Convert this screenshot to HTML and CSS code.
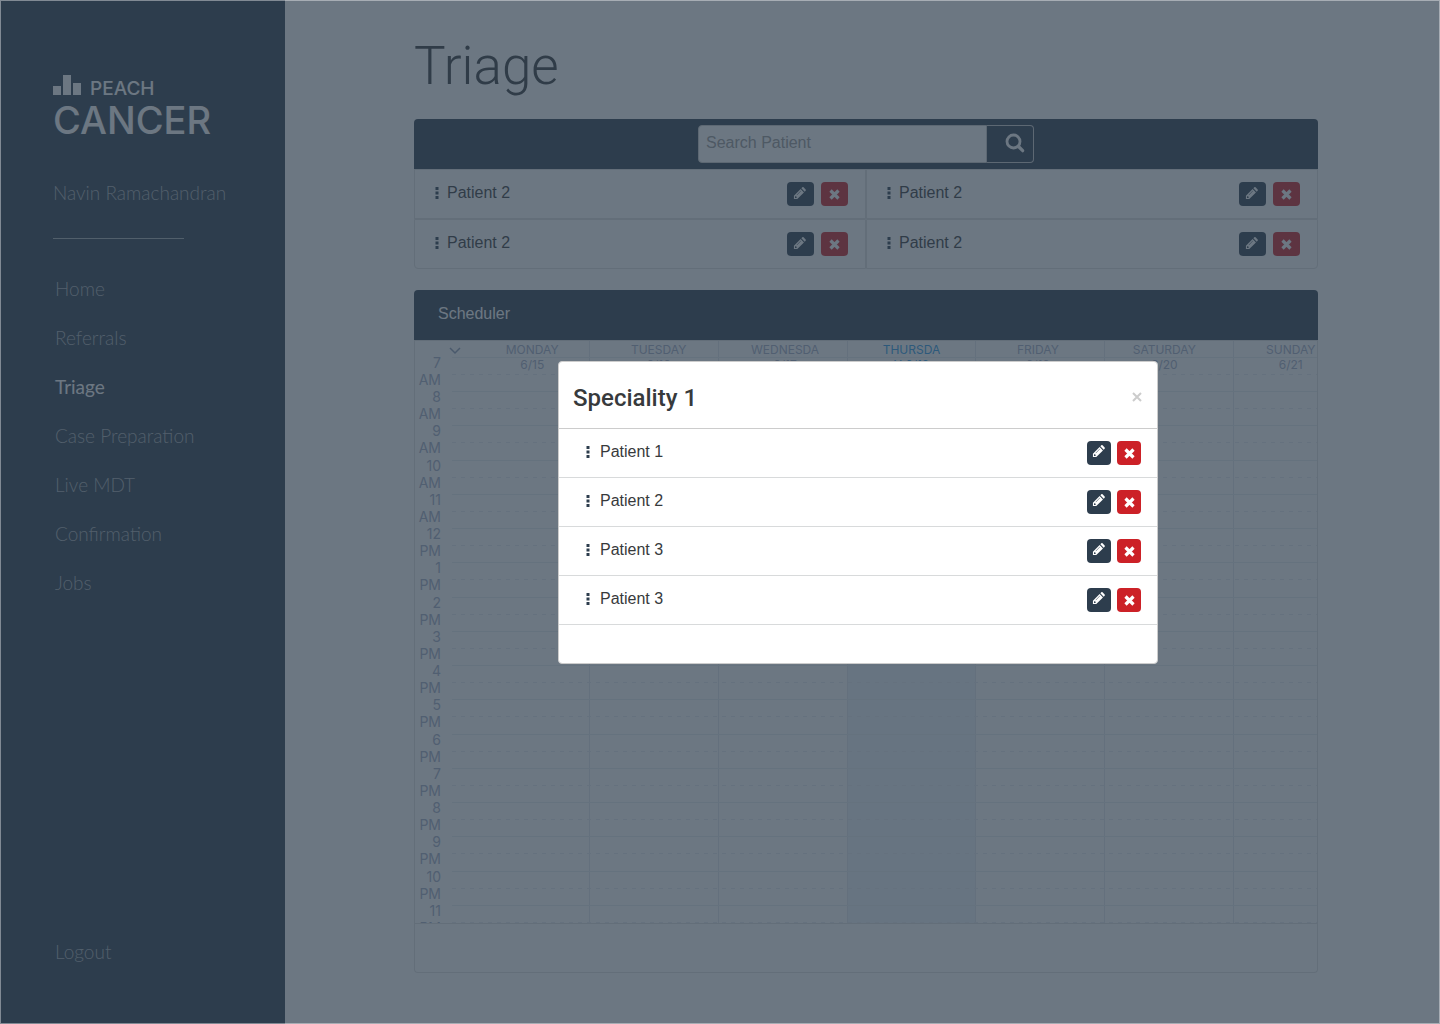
FILE: index.html
```html
<!DOCTYPE html>
<html lang="en">
<head>
<meta charset="utf-8">
<meta name="viewport" content="width=device-width, initial-scale=1">
<title>Triage – Peach Cancer</title>
<link rel="stylesheet" href="styles.css">
</head>
<body>
<svg width="0" height="0" class="sprite" aria-hidden="true">
  <symbol id="pencil" viewBox="0 0 14 14"><path fill="currentColor" fill-rule="evenodd" d="M1 9.4 8.2 2.2l3.600 3.600L4.600 13H1zM2.200 10.600v1.200h1.200l.8-.8-1.200-1.200zM8.300 4.100l.3.3-4.400 4.400-.3-.3zM9 1.400 10 .4q.7-.6 1.400 0l2.200 2.200q.6.7 0 1.400l-1 1z"/></symbol>
  <symbol id="cross" viewBox="0 0 11 11"><path stroke="currentColor" stroke-width="3.200" d="M1.500 1.500l8 8M9.500 1.500l-8 8"/></symbol>
  <symbol id="dots" viewBox="0 0 4 12"><path fill="currentColor" d="M.5 0h3v3h-3zM.5 4.500h3v3h-3zM.5 9h3v3h-3z"/></symbol>
</svg>
<div class="app">
  <aside class="sidebar">
    <div class="logo">
      <div class="logo-top">
        <svg width="28" height="20" viewBox="0 0 28 20" aria-hidden="true"><path fill="currentColor" d="M0 11h8v9H0zM10 0h8v20h-8zM20 8h8v12h-8z"/></svg>
        <span class="logo-small">PEACH</span>
      </div>
      <div class="logo-big">CANCER</div>
    </div>
    <p class="user">Navin Ramachandran</p>
    <nav class="nav">
      <a href="#">Home</a>
      <a href="#">Referrals</a>
      <a href="#" class="active">Triage</a>
      <a href="#">Case Preparation</a>
      <a href="#">Live MDT</a>
      <a href="#">Confirmation</a>
      <a href="#">Jobs</a>
    </nav>
    <a href="#" class="logout">Logout</a>
  </aside>
  <main class="main">
    <h1>Triage</h1>
    <section class="card">
      <form class="card-bar search-bar">
        <div class="search">
          <input type="text" placeholder="Search Patient" aria-label="Search Patient">
          <button type="button" aria-label="Search"><svg width="20" height="20" viewBox="0 0 20 20" fill="none" stroke="currentColor"><circle cx="8.500" cy="8.500" r="6.500" stroke-width="2.800"/><path stroke-width="3.200" stroke-linecap="round" d="M13.500 13.500l4.200 4.200"/></svg></button>
        </div>
      </form>
      <ul class="patients">
        <li><svg class="dots"><use href="#dots"/></svg><span>Patient 2</span><button type="button" class="edit" aria-label="Edit"><svg><use href="#pencil"/></svg></button><button type="button" class="remove" aria-label="Remove"><svg><use href="#cross"/></svg></button></li>
        <li><svg class="dots"><use href="#dots"/></svg><span>Patient 2</span><button type="button" class="edit" aria-label="Edit"><svg><use href="#pencil"/></svg></button><button type="button" class="remove" aria-label="Remove"><svg><use href="#cross"/></svg></button></li>
        <li><svg class="dots"><use href="#dots"/></svg><span>Patient 2</span><button type="button" class="edit" aria-label="Edit"><svg><use href="#pencil"/></svg></button><button type="button" class="remove" aria-label="Remove"><svg><use href="#cross"/></svg></button></li>
        <li><svg class="dots"><use href="#dots"/></svg><span>Patient 2</span><button type="button" class="edit" aria-label="Edit"><svg><use href="#pencil"/></svg></button><button type="button" class="remove" aria-label="Remove"><svg><use href="#cross"/></svg></button></li>
      </ul>
    </section>
    <section class="card">
      <h2 class="card-bar">Scheduler</h2>
      <div class="calendar">
        <div class="days"><div></div><div></div><div></div><div class="today"></div><div></div><div></div><div></div></div>
        <div class="hours">
          <div class="hour"><span>7<br>AM</span><i></i></div>
          <div class="hour"><span>8<br>AM</span><i></i></div>
          <div class="hour"><span>9<br>AM</span><i></i></div>
          <div class="hour"><span>10<br>AM</span><i></i></div>
          <div class="hour"><span>11<br>AM</span><i></i></div>
          <div class="hour"><span>12<br>PM</span><i></i></div>
          <div class="hour"><span>1<br>PM</span><i></i></div>
          <div class="hour"><span>2<br>PM</span><i></i></div>
          <div class="hour"><span>3<br>PM</span><i></i></div>
          <div class="hour"><span>4<br>PM</span><i></i></div>
          <div class="hour"><span>5<br>PM</span><i></i></div>
          <div class="hour"><span>6<br>PM</span><i></i></div>
          <div class="hour"><span>7<br>PM</span><i></i></div>
          <div class="hour"><span>8<br>PM</span><i></i></div>
          <div class="hour"><span>9<br>PM</span><i></i></div>
          <div class="hour"><span>10<br>PM</span><i></i></div>
          <div class="hour"><span>11<br>PM</span><i></i></div>
        </div>
        <div class="day-names">
          <svg width="12" height="8" viewBox="0 0 12 8" fill="none" stroke="currentColor" stroke-width="1.500" aria-hidden="true"><path d="M1 1l5 5 5-5"/></svg>
          <div>MONDAY<br>6/15</div>
          <div>TUESDAY<br>6/16</div>
          <div>WEDNESDA<br>6/17</div>
          <div class="today-name">THURSDA<br>Y 6/18</div>
          <div>FRIDAY<br>6/19</div>
          <div>SATURDAY<br>6/20</div>
          <div>SUNDAY<br>6/21</div>
        </div>
      </div>
      <div class="card-foot"></div>
    </section>
  </main>
</div>
<div class="backdrop">
  <div class="modal" role="dialog" aria-modal="true" aria-labelledby="modal-title">
    <header class="modal-head">
      <h2 id="modal-title">Speciality 1</h2>
      <button type="button" class="close" aria-label="Close"><svg width="10" height="10" viewBox="0 0 10 10" stroke="currentColor" stroke-width="2"><path d="M1 1l8 8M9 1l-8 8"/></svg></button>
    </header>
    <ul class="modal-list">
      <li><svg class="dots"><use href="#dots"/></svg><span>Patient 1</span><button type="button" class="edit" aria-label="Edit"><svg><use href="#pencil"/></svg></button><button type="button" class="remove" aria-label="Remove"><svg><use href="#cross"/></svg></button></li>
      <li><svg class="dots"><use href="#dots"/></svg><span>Patient 2</span><button type="button" class="edit" aria-label="Edit"><svg><use href="#pencil"/></svg></button><button type="button" class="remove" aria-label="Remove"><svg><use href="#cross"/></svg></button></li>
      <li><svg class="dots"><use href="#dots"/></svg><span>Patient 3</span><button type="button" class="edit" aria-label="Edit"><svg><use href="#pencil"/></svg></button><button type="button" class="remove" aria-label="Remove"><svg><use href="#cross"/></svg></button></li>
      <li><svg class="dots"><use href="#dots"/></svg><span>Patient 3</span><button type="button" class="edit" aria-label="Edit"><svg><use href="#pencil"/></svg></button><button type="button" class="remove" aria-label="Remove"><svg><use href="#cross"/></svg></button></li>
    </ul>
  </div>
</div>
</body>
</html>
```
FILE: styles.css
```css
* { box-sizing: border-box; }
body {
  margin: 0;
  font: 16px/24px "Liberation Sans", Arial, sans-serif;
  color: #373a3c;
  background: #fff;
}
h1, h2, p, ul { margin: 0; padding: 0; }
ul { list-style: none; }
button { font: inherit; cursor: pointer; padding: 0; }
.sprite { display: none; }

.app { display: flex; min-height: 100vh; }

/* Sidebar */
.sidebar {
  flex: none;
  width: 285px;
  padding: 75px 24px 60px 53px;
  display: flex;
  flex-direction: column;
  background: #2d3d4d;
  color: #fff;
  font-family: Lato, sans-serif;
}
.logo { font-family: Inter, sans-serif; }
.logo-top { display: flex; align-items: flex-end; gap: 9px; height: 20px; }
.logo-small { font-size: 19px; line-height: 12px; font-weight: 500; }
.logo-big { padding-top: 7px; font-size: 38px; line-height: 36px; font-weight: 500; }
.user {
  margin-top: 43px;
  padding-bottom: 34px;
  font-size: 19px;
  font-weight: 300;
  color: #a6adb3;
  position: relative;
}
.user::after {
  content: "";
  position: absolute;
  left: 0;
  bottom: 0;
  width: 131px;
  height: 1px;
  background: #a6adb3;
}
.nav { display: flex; flex-direction: column; gap: 25px; margin-top: 38px; }
.nav a, .logout {
  padding-left: 2px;
  font-size: 19px;
  font-weight: 300;
  color: #a6adb3;
  text-decoration: none;
}
.nav .active { color: #fff; font-weight: 400; }
.logout { margin-top: auto; }

/* Main column */
.main { flex: 1; min-width: 0; padding: 34px 122px 30px 129px; }
h1 {
  margin-bottom: 21px;
  font: 300 53px/64px Roboto, sans-serif;
}
.card { margin-bottom: 21px; }
.card-bar {
  display: flex;
  align-items: center;
  height: 50px;
  padding: 0 24px 2px;
  border-radius: 4px 4px 0 0;
  background: #2d3d4d;
  color: #fff;
  font-size: 16px;
  font-weight: 400;
}
.search-bar { justify-content: center; padding: 0; }
.search { display: flex; width: 336px; height: 38px; }
.search input {
  flex: 1;
  min-width: 0;
  padding: 0 7px 3px;
  border: 1px solid #ccc;
  border-radius: 4px 0 0 4px;
  background: #fff;
  font: inherit;
}
.search input::placeholder { color: #999; opacity: 1; }
.search button {
  width: 47px;
  padding: 4px 0 0 10px;
  border: 1px solid #ccc;
  border-left: 0;
  border-radius: 0 4px 4px 0;
  background: #2d3d4d;
  color: #fff;
}

/* Patient rows */
.patients { display: grid; grid-template-columns: 1fr 1fr; }
.patients li, .modal-list li { display: flex; align-items: center; }
.patients li {
  height: 50px;
  padding: 0 17px 0 20px;
  border: 1px solid #dfdfdf;
}
.patients li:nth-child(3) { border-bottom-left-radius: 4px; }
.patients li:nth-child(4) { border-bottom-right-radius: 4px; }
li span { flex: 1; padding: 0 0 2px 8px; }
.dots { width: 4px; height: 12px; margin-bottom: 2px; color: #2d3d4d; }
.edit, .remove {
  display: flex;
  align-items: center;
  justify-content: center;
  width: 27px;
  height: 24px;
  border: 0;
  border-radius: 4px;
  color: #fff;
}
.edit { background: #2d3d4d; }
.edit svg { width: 13px; height: 13px; margin: 0 2px 2px 0; }
.remove { margin-left: 7px; background: #cc2127; }
.remove svg { width: 11px; height: 11px; margin-top: 1px; }

/* Scheduler */
.calendar {
  display: grid;
  height: 584px;
  grid-template: 100% / 100%;
  overflow: hidden;
  border: 1px solid #dfdfdf;
  color: #a4aec6;
  font-family: Inter, sans-serif;
}
.calendar > div { grid-area: 1 / 1; }
.days { display: flex; margin-left: 46px; width: 100%; }
.days div { flex: 1; border-right: 1px solid #e3e8ed; }
.days .today {
  padding-top: 32px;
  background: #edf5fb content-box;
}
.hours {
  display: grid;
  grid-template-rows: repeat(17, 1fr);
  align-self: start;
  height: 582px;
  margin-top: 13px;
}
.hour { display: flex; gap: 11px; font-size: 14px; line-height: 17px; min-height: 0; }
.hour span { width: 26px; text-align: right; }
.hour i {
  flex: 1;
  height: 18px;
  margin-top: 3px;
  border-top: 1px solid #e8edf1;
  background: repeating-linear-gradient(90deg, #e6ebf0 0 4px, transparent 4px 9px) 0 100% / 100% 1px no-repeat;
}
.day-names {
  display: flex;
  width: 98%;
  margin-left: 55px;
  padding-top: 1px;
  font: 12px/15px Inter, sans-serif;
  text-align: center;
}
.day-names div { flex: 1; }
.day-names svg { margin: 5px 8px 0 -21px; color: #8d9ab5; }
.today-name { color: #2c9be6; }
.card-foot {
  height: 49px;
  border: 1px solid #dfdfdf;
  border-top: 0;
  border-radius: 0 0 4px 4px;
}

/* Dialog */
.backdrop {
  position: fixed;
  inset: 0;
  display: flex;
  align-items: center;
  justify-content: center;
  padding-left: 276px;
  background: rgba(45, 61, 77, .7);
  border: 1px solid rgba(255, 255, 255, .4);
}
.modal {
  width: 600px;
  padding-bottom: 38px;
  border: 1px solid #ccc;
  border-radius: 4px;
  background: #fff;
}
.modal-head {
  display: flex;
  align-items: center;
  justify-content: space-between;
  height: 67px;
  padding: 6px 15px 0 14px;
  border-bottom: 1px solid #ccc;
}
.modal-head h2 { font: 500 24px/28px Roboto, sans-serif; }
.close { display: flex; padding-bottom: 2px; border: 0; background: none; color: #ccc; }
.modal-list li {
  height: 49px;
  padding: 0 16px 0 27px;
  border-bottom: 1px solid #d8dadb;
}
.modal-list li span { padding-left: 10px; }
.modal-list button { width: 24px; }
.modal-list .remove { margin-left: 6px; }
```
